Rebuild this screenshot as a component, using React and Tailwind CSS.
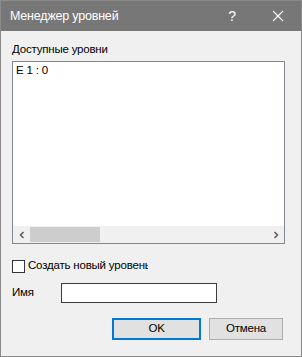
export default function App() {
  return (
    <div
      className="relative w-[302px] h-[357px] bg-[#f0f0f0] border border-[#8a8a8a] text-[11.5px] tracking-[-0.2px] text-black"
      style={{ fontFamily: '"Liberation Sans", "Noto Sans", sans-serif' }}
    >
      <div className="h-[30px] bg-[#777777] flex items-center text-white">
        <span className="ml-[9px] text-[12.5px] tracking-[-0.2px] flex-1">Менеджер уровней</span>
        <span className="w-[46px] text-center text-[14px]">?</span>
        <span className="w-[46px] h-full flex items-center justify-center">
          <svg width="12" height="12" viewBox="0 0 12 12">
            <path d="M1 1 L11 11 M11 1 L1 11" stroke="white" strokeWidth="1.1" />
          </svg>
        </span>
      </div>

      <div className="px-[11px]">
        <div className="mt-[11px] leading-[15px]">Доступные уровни</div>
        <div className="mt-[4px] w-[273px] h-[183px] border border-[#828790] bg-white flex flex-col">
          <div className="flex-1 pl-[3px] pt-[1px] leading-[15px]">E 1 : 0</div>
          <div className="h-[17px] bg-[#f0f0f0] flex items-center">
            <span className="w-[17px] flex justify-center">
              <svg width="8" height="8" viewBox="0 0 8 8">
                <path d="M5.5 1 L2.5 4 L5.5 7" stroke="#606060" strokeWidth="1.6" fill="none" />
              </svg>
            </span>
            <span className="w-[70px] h-[15px] bg-[#cdcdcd]" />
            <span className="flex-1" />
            <span className="w-[17px] flex justify-center">
              <svg width="8" height="8" viewBox="0 0 8 8">
                <path d="M2.5 1 L5.5 4 L2.5 7" stroke="#606060" strokeWidth="1.6" fill="none" />
              </svg>
            </span>
          </div>
        </div>

        <label className="mt-[15px] flex items-center h-[14px]">
          <span className="w-[13px] h-[13px] border border-[#333333] bg-white shrink-0" />
          <span className="ml-[3px] w-[120px] overflow-hidden whitespace-nowrap">Создать новый уровень</span>
        </label>

        <div className="mt-[10px] flex items-center">
          <span className="w-[49px]">Имя</span>
          <span className="w-[156px] h-[20px] border border-[#3c3c3c] bg-white" />
        </div>

        <div className="mt-[15px] flex justify-end gap-[8px] pr-[7px]">
          <button className="w-[89px] h-[22px] border-2 border-[#0078d7] bg-[#e1e1e1] flex items-center justify-center">
            OK
          </button>
          <button className="w-[74px] h-[22px] border border-[#adadad] bg-[#e1e1e1] flex items-center justify-center">
            Отмена
          </button>
        </div>
      </div>
    </div>
  );
}
